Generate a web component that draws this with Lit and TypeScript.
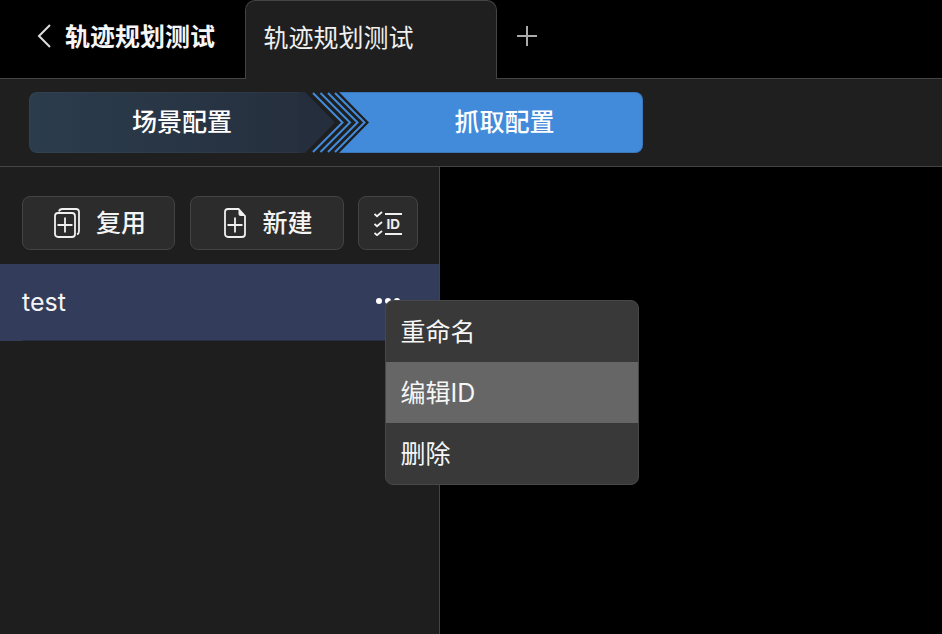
import { LitElement, html, css } from "lit";
import { customElement } from "lit/decorators.js";

@customElement("app-root")
export class AppRoot extends LitElement {
  static styles = css`
    :host { display: block; width: 942px; height: 634px; background: #000; color: #fff; overflow: hidden;
      font-family: "Inter", "Noto Sans CJK SC", sans-serif; font-size: 25px; }
    * { box-sizing: border-box; }
    .top { height: 79px; display: flex; align-items: stretch; border-bottom: 1px solid #444; }
    .back { width: 245px; display: flex; align-items: center; padding-left: 36px; padding-bottom: 8px; gap: 14px; font-weight: 700; color: #f6f6f6; }
    .back svg { margin-top: 2px; }
    .tab { width: 252px; height: 79px; background: #1f1f1f; border: 1px solid #444; border-bottom: none; border-radius: 10px 10px 0 0;
      padding: 17px 0 0 17.500px; line-height: 40px; color: #f0f0f0; }
    .plus { width: 60px; display: flex; align-items: center; justify-content: center; padding-bottom: 6px; }
    .bar { height: 88px; background: #1f1f1f; border-bottom: 1px solid #444; padding: 13px 29px 0; }
    .stepper { position: relative; width: 614px; height: 61px; display: flex; font-weight: 500; }
    .seg { display: flex; align-items: center; justify-content: center; line-height: 1; }
    .seg.a { width: 306px; background: linear-gradient(90deg, #2b3c4c, #252e3d); border-radius: 8px 0 0 8px; box-shadow: inset 1px 1px 0 rgba(255,255,255,.03), inset 0 -1px 0 rgba(255,255,255,.03); }
    .seg.b { flex: 1; background: #428bdb; border-radius: 0 8px 8px 0; margin-left: 4px; padding-left: 27px; box-shadow: inset 0 0 0 1px rgba(40,60,90,.25); }
    .arrows { position: absolute; left: 270px; top: 0; }
    .main { display: flex; height: 467px; }
    .side { position: relative; width: 440px; background: #1e1e1e; border-right: 1px solid #444; padding-top: 29px; }
    .tools { display: flex; gap: 15px; padding-left: 22px; height: 54px; }
    .btn { height: 54px; width: 153px; background: #2c2c2c; border: 1px solid #434343; border-radius: 8px; display: flex; align-items: center; justify-content: center; gap: 16px; padding-left: 3px; color: #f4f4f4; font-weight: 500; }
    .btn.new { width: 154px; gap: 16px; padding-left: 3px; }
    .btn.id { width: 60px; margin-left: -1px; padding-left: 0; }
    .lbl { padding-bottom: 4px; }
    .row { position: relative; margin-top: 14px; height: 77px; background: #343c5c; display: flex; align-items: center; justify-content: space-between; padding: 0 39px 2px 22px; color: #f4f4f4; }
    .row::after { content: ""; position: absolute; left: 22px; right: 0; bottom: 0; height: 1px; background: #2a2e42; }
    .dots { display: flex; gap: 3px; margin-bottom: 2px; }
    .dots i { width: 6px; height: 6px; border-radius: 50%; background: #fff; }
    .menu { position: absolute; left: 385px; top: 133px; width: 254px; height: 185px; background: #393939; border: 1px solid #484848; border-radius: 8px; overflow: hidden; display: flex; flex-direction: column; }
    .item { height: 61px; display: flex; align-items: center; padding: 0 0 4px 14.500px; color: #f6f6f6; }
    .item.on { background: #666; }
  `;

  render() {
    return html`
      <div class="top">
        <div class="back">
          <svg width="15" height="24" viewBox="0 0 15 24" fill="none" stroke="#ddd" stroke-width="2"><path d="M14 1 3 12l11 11"/></svg>
          <span>轨迹规划测试</span>
        </div>
        <div class="tab">轨迹规划测试</div>
        <div class="plus"><svg width="20" height="20" viewBox="0 0 20 20" stroke="#aaa" stroke-width="2"><path d="M0 10h20M10 0v20"/></svg></div>
      </div>
      <div class="bar">
        <div class="stepper">
          <div class="seg a"><span>场景配置</span></div>
          <div class="seg b"><span>抓取配置</span></div>
          <svg class="arrows" width="80" height="61" viewBox="0 0 80 61" fill="none">
            <path d="M6 0 36 30.500 6 61H0V0z" fill="#252e3d"/>
            <path d="M6 0 36 30.500 6 61h34l30-30.500L40 0z" fill="#1f1f1f"/>
            <path d="M14 1 43.500 30.500 14 60M21.500 1 51 30.500 21.500 60M29 1 58.500 30.500 29 60M36 1 65.500 30.500 36 60" stroke="#428bdb" stroke-width="2"/>
          </svg>
        </div>
      </div>
      <div class="main">
        <div class="side">
          <div class="tools">
            <div class="btn">
              <svg width="26" height="30" viewBox="0 0 26 30" fill="none" stroke="#f0f0f0" stroke-width="1.800">
                <rect x="1" y="5" width="20" height="24" rx="3"/>
                <path d="M5 3.500Q5.500 1 8.500 1H22q3 0 3 3v19q0 2.500-2 3.500"/>
                <path d="M11 9.500v15M3.500 17h15"/>
              </svg>
              <span class="lbl">复用</span>
            </div>
            <div class="btn new">
              <svg width="22" height="30" viewBox="0 0 22 30" fill="none" stroke="#f0f0f0" stroke-width="1.800">
                <path d="M4 1h10.500L21 8v18a3 3 0 0 1-3 3H4a3 3 0 0 1-3-3V4a3 3 0 0 1 3-3z"/>
                <path d="M14.500 1 21 8h-4.500a2 2 0 0 1-2-2z" fill="#f0f0f0" stroke="none"/>
                <path d="M11 9.500v15M3.500 17h15"/>
              </svg>
              <span class="lbl">新建</span>
            </div>
            <div class="btn id">
              <svg width="29" height="25" viewBox="0 0 29 25" fill="none" stroke="#f0f0f0" stroke-width="1.800">
                <path d="M.5 3l2.500 2.200L8 1M.5 13l2.500 2.200L8 11M.5 22l2.500 2.200L8 20M11 3h17M11 23h17"/>
                <text x="12.500" y="18" font-size="13.500" font-weight="700" fill="#f0f0f0" stroke="none">ID</text>
              </svg>
            </div>
          </div>
          <div class="row"><span>test</span><div class="dots"><i></i><i></i><i></i></div></div>
          <div class="menu">
            <div class="item">重命名</div>
            <div class="item on">编辑ID</div>
            <div class="item">删除</div>
          </div>
        </div>
      </div>
    `;
  }
}
